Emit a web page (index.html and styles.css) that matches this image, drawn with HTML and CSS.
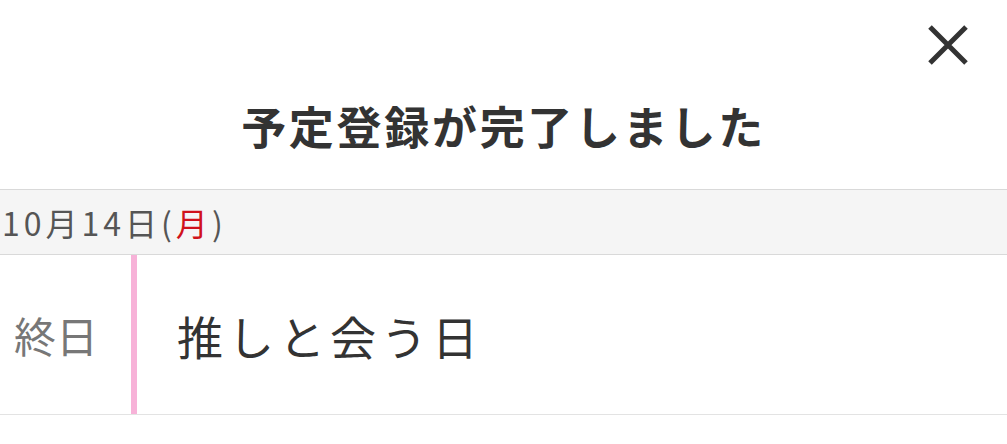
FILE: index.html
```html
<!DOCTYPE html>
<html lang="ja">
<head>
<meta charset="utf-8">
<link rel="stylesheet" href="styles.css">
</head>
<body>
<div class="modal">
  <div class="modal-top">
    <button class="close" aria-label="閉じる">
      <svg width="44" height="44" viewBox="0 0 44 44"><path d="M4 4 L40 40 M40 4 L4 40" stroke="#333" stroke-width="5" fill="none"/></svg>
    </button>
  </div>
  <h1 class="title">予定登録が完了しました</h1>
  <div class="date-bar">10月14日(<span class="dow">月</span>)</div>
  <div class="event-row">
    <div class="event-time">終日</div>
    <div class="event-name">推しと会う日</div>
  </div>
</div>
</body>
</html>
```
FILE: styles.css
```css
html, body {
  margin: 0;
  padding: 0;
  background: #fff;
}
body {
  font-family: "Noto Sans CJK JP", "Noto Sans", sans-serif;
  color: #333;
}
.modal {
  width: 1007px;
}
.modal-top {
  display: flex;
  justify-content: flex-end;
  padding: 23px 37px 0 0;
  height: 67px;
  box-sizing: border-box;
}
.close {
  border: 0;
  background: none;
  padding: 0;
  width: 44px;
  height: 44px;
  display: block;
}
.close svg { display: block; }
.title {
  margin: 0;
  height: 122px;
  display: flex;
  align-items: center;
  justify-content: center;
  font-size: 45px;
  font-weight: 700;
  letter-spacing: 2.7px;
  line-height: 1;
  padding-bottom: 6px;
  box-sizing: border-box;
}
.date-bar {
  height: 66px;
  box-sizing: border-box;
  border-top: 1px solid #d9d9d9;
  border-bottom: 1px solid #d9d9d9;
  background: #f5f5f5;
  display: flex;
  align-items: center;
  padding-left: 2px;
  font-size: 32px;
  letter-spacing: 4px;
  color: #555;
}
.dow { color: #d0121b; }
.event-row {
  display: flex;
  height: 160px;
  box-sizing: border-box;
  border-bottom: 1px solid #e3e3e3;
}
.event-time {
  width: 131px;
  box-sizing: border-box;
  padding-left: 14px;
  display: flex;
  align-items: center;
  font-size: 42px;
  color: #777;
}
.event-name {
  flex: 1;
  border-left: 6px solid #f7b2d8;
  padding-left: 40px;
  display: flex;
  align-items: center;
  font-size: 46px;
  letter-spacing: 5px;
  color: #333;
}
```
